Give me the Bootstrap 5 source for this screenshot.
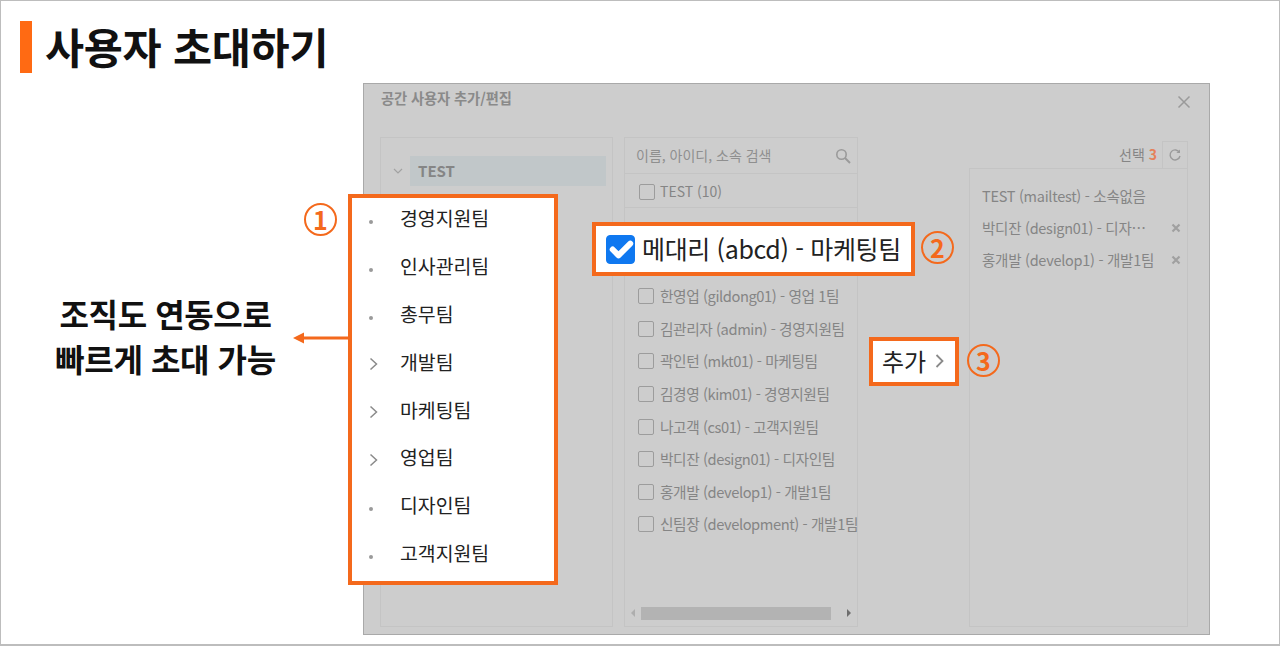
<!DOCTYPE html>
<html lang="ko">
<head>
  <meta charset="UTF-8">
  <title>사용자 초대하기</title>
  <meta name="viewport" content="width=device-width, initial-scale=1.0" />
  <link href="https://cdn.jsdelivr.net/npm/bootstrap@5.3.2/dist/css/bootstrap.min.css" rel="stylesheet" />
  <style>
    html, body {
      height: 100%;
      overflow: hidden;
    }
    body {
      font-family: "Noto Sans CJK KR", "Noto Sans", sans-serif;
      background: #fff;
      color: #111;
    }
    .slide-frame {
      width: 1280px;
      height: 646px;
      border: 1px solid #bdbdbd;
      border-width: 1px 1px 2px 1px;
    }
    .slide-head {
      padding: 20px 0 0 19px;
      height: 82px;
    }
    .head-bar {
      width: 12px;
      height: 52px;
      background: #ff6a13;
    }
    .head-title {
      font-size: 42.5px;
      font-weight: 700;
      line-height: 50px;
      margin: 0 0 0 13px;
      letter-spacing: -0.3px;
    }
    .slide-body {
      height: 552px;
    }
    .side-note {
      width: 362px;
      padding-top: 208px;
    }
    .side-text {
      width: 292px;
      padding-left: 37px;
      font-size: 32px;
      font-weight: 700;
      line-height: 45px;
      text-align: center;
      letter-spacing: -0.4px;
      white-space: nowrap;
    }
    .dlg {
      width: 847px;
      height: 552px;
      background: #cdcdcd;
      border: 1px solid #a9a9a9;
      color: #858585;
      font-size: 14px;
    }
    .dlg-head {
      height: 53px;
      padding: 3px 17px 0 17px;
    }
    .dlg-title {
      font-size: 14.3px;
      font-weight: 700;
      color: #8a8a8a;
      letter-spacing: -0.1px;
    }
    .dlg-close {
      margin-top: 7px;
    }
    .dlg-cols {
      padding-left: 16px;
      gap: 11px;
    }
    .pane {
      height: 490px;
      border: 1px solid #c4c4c4;
    }
    .pane-tree {
      width: 233px;
      padding: 18px 6px 0 12px;
    }
    .tree-root {
      height: 30px;
      font-size: 15px;
      font-weight: 700;
    }
    .tree-name {
      background: #c1c7c9;
      height: 30px;
      line-height: 29px;
      padding-left: 8px;
      margin-left: 7px;
    }
    .pane-users {
      width: 234px;
    }
    .search-row {
      height: 36px;
      padding: 0 6px 0 11px;
      border-bottom: 1px solid #c4c4c4;
      font-size: 14px;
      color: #8f8f8f;
    }
    .all-row {
      height: 34px;
      padding: 2px 0 0 14px;
      border-bottom: 1px solid #c4c4c4;
      font-size: 14px;
    }
    .user-list {
      height: 393px;
      padding: 72px 0 0 13px;
      white-space: nowrap;
    }
    .user-row {
      height: 32.6px;
      font-size: 14.7px;
      letter-spacing: -0.42px;
    }
    .tick-box {
      flex: none;
      width: 16px;
      height: 16px;
      border: 1px solid #9c9c9c;
      border-radius: 2px;
      margin-right: 6px;
    }
    .all-row .tick-box {
      margin-right: 5px;
    }
    .scroll-row {
      height: 24px;
      padding: 0 6px;
    }
    .scroll-thumb {
      width: 190px;
      height: 13px;
      background: #b3b3b3;
      margin-left: 6px;
    }
    .arrow-left {
      width: 0;
      height: 0;
      border: 4px solid transparent;
      border-right: 4px solid #aeaeae;
      border-left: 0;
    }
    .arrow-right {
      width: 0;
      height: 0;
      border: 4px solid transparent;
      border-left: 4px solid #6e6e6e;
      border-right: 0;
    }
    .mid-gap {
      width: 89px;
    }
    .picked-wrap {
      width: 219px;
    }
    .picked-head {
      height: 31px;
      font-size: 14px;
      gap: 5px;
      padding-top: 4px;
    }
    .picked-count {
      color: #e5815a;
      font-weight: 700;
    }
    .reset-btn {
      width: 26px;
      height: 27px;
      border: 1px solid #c4c4c4;
      border-bottom: 0;
    }
    .picked-list {
      height: 459px;
      border: 1px solid #c4c4c4;
      padding: 11px 6px 0 12px;
      font-size: 14.5px;
      letter-spacing: -0.27px;
    }
    .picked-row {
      height: 32px;
      white-space: nowrap;
    }
    .callout {
      position: absolute;
      background: #fff;
      border: 4px solid #f4691c;
      color: #222;
    }
    .callout-tree {
      left: 347px;
      top: 193px;
      width: 210px;
      height: 391px;
    }
    .tree-item {
      height: 47.8px;
      font-size: 19.4px;
      padding-bottom: 8px;
    }
    .tree-mark {
      width: 48px;
      padding-left: 17px;
      padding-top: 6px;
    }
    .tree-dot {
      width: 4px;
      height: 4px;
      border-radius: 50%;
      background: #9a9a9a;
      margin-top: 3px;
    }
    .callout-check {
      left: 591px;
      top: 221px;
      width: 323px;
      height: 54px;
      padding-left: 10px;
      font-size: 25px;
      letter-spacing: -0.35px;
      white-space: nowrap;
    }
    .callout-check .form-check-input {
      width: 29px;
      height: 29px;
      margin: 0 7px 0 0;
      flex: none;
      background-color: #0f78f0;
      border-color: #0f78f0;
      background-size: 145%;
      border-radius: 4px;
    }
    .callout-add {
      left: 868px;
      top: 336px;
      width: 90px;
      height: 49px;
      padding: 0 0 2px 9px;
      font-size: 24px;
      gap: 9px;
    }
    .step-num {
      position: absolute;
      width: 33px;
      height: 33px;
      border: 2.5px solid #f4691c;
      border-radius: 50%;
      color: #f4691c;
      font-size: 25px;
      font-weight: 700;
      line-height: 1;
    }
    .step-one { left: 303px; top: 202px; }
    .step-two { left: 920px; top: 230px; }
    .step-three { left: 966px; top: 343px; }
    .lead-arrow {
      left: 292px;
      top: 331px;
    }
  </style>
</head>
<body>
  <div class="slide-frame position-relative">
    <div class="slide-head d-flex align-items-start">
      <div class="head-bar"></div>
      <h1 class="head-title">사용자 초대하기</h1>
    </div>

    <div class="slide-body d-flex">
      <div class="side-note">
        <div class="side-text">조직도 연동으로<br>빠르게 초대 가능</div>
      </div>

      <div class="dlg">
        <div class="dlg-head d-flex justify-content-between">
          <div class="dlg-title">공간 사용자 추가/편집</div>
          <svg class="dlg-close" width="16" height="16" viewBox="0 0 16 16"><path d="M2.5 2.5l11 11M13.5 2.5l-11 11" stroke="#9a9a9a" stroke-width="1.5" fill="none"/></svg>
        </div>
        <div class="dlg-cols d-flex">
          <div class="pane pane-tree">
            <div class="tree-root d-flex align-items-center">
              <svg width="10" height="10" viewBox="0 0 10 10"><path d="M1 3l4 4 4-4" stroke="#a2a2a2" stroke-width="1.2" fill="none"/></svg>
              <div class="tree-name flex-grow-1">TEST</div>
            </div>
          </div>

          <div class="pane pane-users">
            <div class="search-row d-flex align-items-center justify-content-between">
              <span>이름, 아이디, 소속 검색</span>
              <svg width="16" height="16" viewBox="0 0 16 16"><circle cx="6.5" cy="6.5" r="4.7" stroke="#9a9a9a" stroke-width="1.6" fill="none"/><path d="M10 10l5 5" stroke="#9a9a9a" stroke-width="2" fill="none"/></svg>
            </div>
            <div class="all-row d-flex align-items-center"><span class="tick-box"></span>TEST (10)</div>
            <div class="user-list">
              <div class="user-row d-flex align-items-center"><span class="tick-box"></span>한영업 (gildong01) - 영업 1팀</div>
              <div class="user-row d-flex align-items-center"><span class="tick-box"></span>김관리자 (admin) - 경영지원팀</div>
              <div class="user-row d-flex align-items-center"><span class="tick-box"></span>곽인턴 (mkt01) - 마케팅팀</div>
              <div class="user-row d-flex align-items-center"><span class="tick-box"></span>김경영 (kim01) - 경영지원팀</div>
              <div class="user-row d-flex align-items-center"><span class="tick-box"></span>나고객 (cs01) - 고객지원팀</div>
              <div class="user-row d-flex align-items-center"><span class="tick-box"></span>박디잔 (design01) - 디자인팀</div>
              <div class="user-row d-flex align-items-center"><span class="tick-box"></span>홍개발 (develop1) - 개발1팀</div>
              <div class="user-row d-flex align-items-center"><span class="tick-box"></span>신팀장 (development) - 개발1팀</div>
            </div>
            <div class="scroll-row d-flex align-items-center justify-content-between">
              <span class="arrow-left"></span>
              <span class="scroll-thumb me-auto"></span>
              <span class="arrow-right"></span>
            </div>
          </div>

          <div class="mid-gap"></div>

          <div class="picked-wrap">
            <div class="picked-head d-flex justify-content-end align-items-center">
              <span>선택 <span class="picked-count">3</span></span>
              <span class="reset-btn d-flex align-items-center justify-content-center">
                <svg width="14" height="14" viewBox="0 0 14 14"><path d="M11.5 4.5A5 5 0 1 0 12 8" stroke="#9a9a9a" stroke-width="1.4" fill="none"/><path d="M12 1.5v3.6H8.4z" fill="#9a9a9a"/></svg>
              </span>
            </div>
            <div class="picked-list">
              <div class="picked-row d-flex align-items-center">TEST (mailtest) - 소속없음</div>
              <div class="picked-row d-flex align-items-center justify-content-between"><span>박디잔 (design01) - 디자…</span><svg width="10" height="10" viewBox="0 0 10 10"><path d="M1.5 1.5l7 7M8.5 1.5l-7 7" stroke="#a0a0a0" stroke-width="2.2" fill="none"/></svg></div>
              <div class="picked-row d-flex align-items-center justify-content-between"><span>홍개발 (develop1) - 개발1팀</span><svg width="10" height="10" viewBox="0 0 10 10"><path d="M1.5 1.5l7 7M8.5 1.5l-7 7" stroke="#a0a0a0" stroke-width="2.2" fill="none"/></svg></div>
            </div>
          </div>
        </div>
      </div>
    </div>

    <svg class="position-absolute lead-arrow" width="55" height="12" viewBox="0 0 55 12"><path d="M10 6h45" stroke="#f4691c" stroke-width="3"/><path d="M0 6l11-5.5v11z" fill="#f4691c"/></svg>

    <div class="callout callout-tree">
      <div class="tree-item d-flex align-items-center"><span class="tree-mark"><span class="tree-dot d-block"></span></span>경영지원팀</div>
      <div class="tree-item d-flex align-items-center"><span class="tree-mark"><span class="tree-dot d-block"></span></span>인사관리팀</div>
      <div class="tree-item d-flex align-items-center"><span class="tree-mark"><span class="tree-dot d-block"></span></span>총무팀</div>
      <div class="tree-item d-flex align-items-center"><span class="tree-mark"><svg class="d-block" width="9" height="14" viewBox="0 0 9 14"><path d="M1.5 1.5L7.5 7l-6 5.5" stroke="#8a8a8a" stroke-width="1.5" fill="none"/></svg></span>개발팀</div>
      <div class="tree-item d-flex align-items-center"><span class="tree-mark"><svg class="d-block" width="9" height="14" viewBox="0 0 9 14"><path d="M1.5 1.5L7.5 7l-6 5.5" stroke="#8a8a8a" stroke-width="1.5" fill="none"/></svg></span>마케팅팀</div>
      <div class="tree-item d-flex align-items-center"><span class="tree-mark"><svg class="d-block" width="9" height="14" viewBox="0 0 9 14"><path d="M1.5 1.5L7.5 7l-6 5.5" stroke="#8a8a8a" stroke-width="1.5" fill="none"/></svg></span>영업팀</div>
      <div class="tree-item d-flex align-items-center"><span class="tree-mark"><span class="tree-dot d-block"></span></span>디자인팀</div>
      <div class="tree-item d-flex align-items-center"><span class="tree-mark"><span class="tree-dot d-block"></span></span>고객지원팀</div>
    </div>

    <div class="callout callout-check d-flex align-items-center">
      <input class="form-check-input" type="checkbox" checked aria-label="메대리">
      <span>메대리 (abcd) - 마케팅팀</span>
    </div>

    <div class="callout callout-add d-flex align-items-center">
      <span>추가</span>
      <svg width="9" height="16" viewBox="0 0 9 16"><path d="M1.5 2L7.5 8l-6 6" stroke="#8a8a8a" stroke-width="1.8" fill="none"/></svg>
    </div>

    <div class="step-num step-one d-flex align-items-center justify-content-center">1</div>
    <div class="step-num step-two d-flex align-items-center justify-content-center">2</div>
    <div class="step-num step-three d-flex align-items-center justify-content-center">3</div>
  </div>
</body>
</html>
